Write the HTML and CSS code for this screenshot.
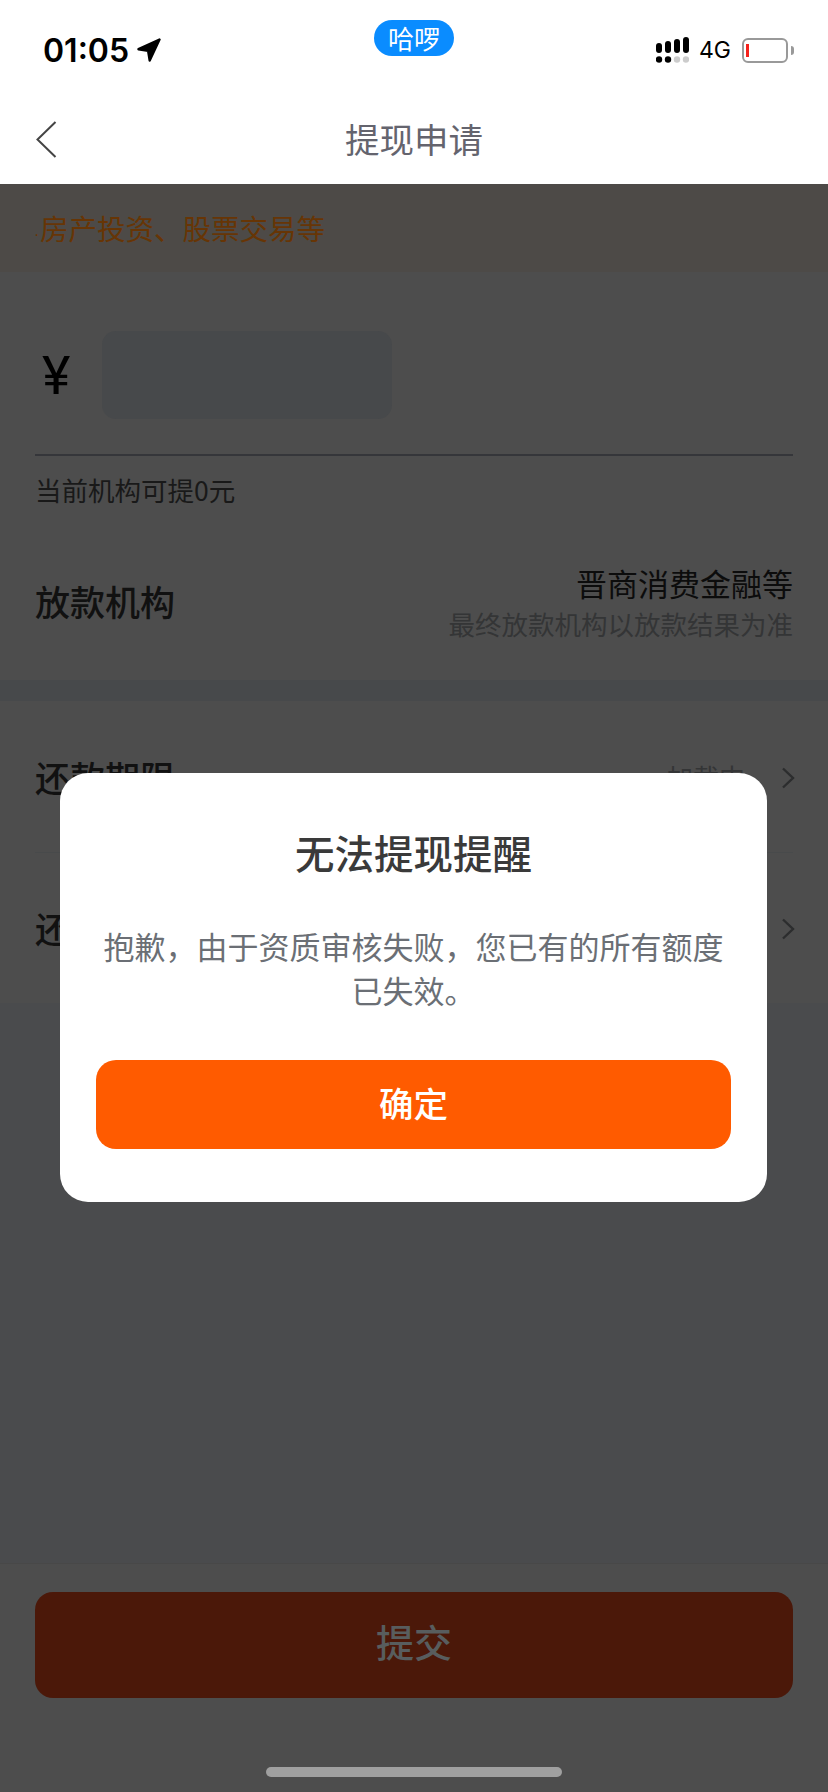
FILE: index.html
```html
<!DOCTYPE html>
<html lang="zh-CN">
<head>
    <meta charset="UTF-8">
    <meta name="viewport" content="width=device-width, initial-scale=1.0">
    <title>提现申请</title>
    <link rel="stylesheet" href="styles.css">
</head>
<body>
    <div class="page">
        <div class="status-bar">
            <div class="status-left">
                <span class="time">01:05</span>
                <svg class="location" viewBox="0 0 24 24"><path d="M22.500 1.500 1.500 11.200l9.600 1.600 1.600 9.700z" fill="#000" stroke="#000" stroke-width="2.400" stroke-linejoin="round"/></svg>
            </div>
            <div class="app-badge">哈啰</div>
            <div class="status-right">
                <svg class="signal" viewBox="0 0 33 26">
                    <rect x="0" y="6" width="6" height="10" rx="3" fill="#000"/>
                    <rect x="9" y="4" width="6" height="12" rx="3" fill="#000"/>
                    <rect x="18" y="2" width="6" height="14" rx="3" fill="#000"/>
                    <rect x="27" y="0" width="6" height="16" rx="3" fill="#000"/>
                    <circle cx="3" cy="22.500" r="3.200" fill="#000"/>
                    <circle cx="12" cy="22.500" r="3.200" fill="#000"/>
                    <circle cx="21" cy="22.500" r="3.200" fill="#ccc"/>
                    <circle cx="30" cy="22.500" r="3.200" fill="#ccc"/>
                </svg>
                <span class="network">4G</span>
                <div class="battery"><div class="battery-level"></div></div>
                <div class="battery-nub"></div>
            </div>
        </div>

        <div class="nav-bar">
            <div class="nav-side">
                <svg class="back" viewBox="0 0 21 37"><path d="M19.500 1 1.500 18.500 19.500 36" fill="none" stroke="#444" stroke-width="2"/></svg>
            </div>
            <div class="nav-title">提现申请</div>
            <div class="nav-side"></div>
        </div>

        <div class="notice"><span class="notice-dot">·</span>房产投资、股票交易等</div>

        <div class="amount">
            <div class="amount-input">
                <span class="yen">¥</span>
                <div class="input-box"></div>
            </div>
            <div class="hint">当前机构可提0元</div>
        </div>

        <div class="lender">
            <div class="row-label">放款机构</div>
            <div class="lender-info">
                <div class="lender-name">晋商消费金融等</div>
                <div class="lender-note">最终放款机构以放款结果为准</div>
            </div>
        </div>

        <div class="gap"></div>

        <div class="options">
            <div class="option">
                <div class="row-label">还款期限</div>
                <div class="option-value">
                    <span>加载中</span>
                    <svg class="chevron" viewBox="0 0 14 22"><path d="M2 1.500 12 11 2 20.500" fill="none" stroke="#2c2d2e" stroke-width="2.400"/></svg>
                </div>
            </div>
            <div class="option option-last">
                <div class="row-label">还款方式</div>
                <div class="option-value">
                    <svg class="chevron" viewBox="0 0 14 22"><path d="M2 1.500 12 11 2 20.500" fill="none" stroke="#2c2d2e" stroke-width="2.400"/></svg>
                </div>
            </div>
        </div>

        <div class="filler"></div>

        <div class="footer">
            <div class="submit">提交</div>
            <div class="home-bar"></div>
        </div>

        <div class="dialog">
            <div class="dialog-title">无法提现提醒</div>
            <div class="dialog-text">抱歉，由于资质审核失败，您已有的所有额度已失效。</div>
            <div class="dialog-btn">确定</div>
        </div>
    </div>
</body>
</html>
```

FILE: styles.css
```css
* {
    box-sizing: border-box;
}
body {
    margin: 0;
    font-family: "Noto Sans CJK SC", "Noto Sans", sans-serif;
    background: #4d4d4d;
}
.page {
    position: relative;
    width: 828px;
    height: 1792px;
    display: flex;
    flex-direction: column;
    overflow: hidden;
    background: #4d4d4d;
}

/* status bar */
.status-bar {
    height: 88px;
    background: #fff;
    display: grid;
    grid-template-columns: 1fr auto 1fr;
    padding: 0 34px;
}
.status-left {
    display: flex;
    align-items: center;
    gap: 8px;
    height: 100px;
    padding-left: 9px;
}
.time {
    font-family: Inter, sans-serif;
    font-size: 32px;
    font-weight: 600;
    color: #000;
}
.location {
    width: 24px;
    height: 24px;
}
.app-badge {
    width: 80px;
    height: 36px;
    margin-top: 20px;
    border-radius: 18px;
    background: #0a8cff;
    color: #fff;
    font-size: 26px;
    line-height: 35px;
    text-align: center;
}
.status-right {
    display: flex;
    align-items: center;
    justify-content: flex-end;
    height: 100px;
}
.signal {
    width: 33px;
    height: 26px;
}
.network {
    margin-left: 10px;
    font-family: Inter, sans-serif;
    font-size: 23px;
    color: #000;
}
.battery {
    width: 46px;
    height: 25px;
    margin-left: 11px;
    padding: 4px 2px;
    border: 2px solid #999;
    border-radius: 6px;
}
.battery-level {
    width: 3px;
    height: 100%;
    background: #f5221c;
}
.battery-nub {
    width: 3px;
    height: 9px;
    margin-left: 3px;
    border-radius: 0 3px 3px 0;
    background: #999;
}

/* nav */
.nav-bar {
    height: 96px;
    background: #fff;
    display: grid;
    grid-template-columns: 1fr auto 1fr;
    align-items: center;
    padding: 0 35px;
}
.nav-side {
    display: flex;
    align-items: center;
}
.back {
    width: 21px;
    height: 37px;
    margin: 6px 0 0 1px;
}
.nav-title {
    font-size: 34.500px;
    line-height: 48px;
    margin-top: 4px;
    color: #64646e;
}

/* page under the dialog */
.notice {
    height: 88px;
    padding-left: 34px;
    background: #4d4a47;
    color: #673505;
    font-size: 28.500px;
    line-height: 88px;
    white-space: nowrap;
}
.notice-dot {
    display: inline-block;
    width: 6px;
    font-family: "Liberation Sans", sans-serif;
    font-size: 16px;
}
.amount {
    padding: 60px 35px 0;
}
.amount-input {
    display: flex;
    align-items: center;
    height: 124px;
    padding-bottom: 36px;
    border-bottom: 2px solid #35363a;
}
.yen {
    width: 67px;
    padding-left: 7px;
    font-family: Roboto, sans-serif;
    font-size: 54px;
    font-weight: 400;
    color: #000;
}
.input-box {
    width: 290px;
    height: 88px;
    border-radius: 14px;
    background: #47494b;
}
.hint {
    margin-top: 16px;
    font-size: 26.500px;
    line-height: 36px;
    color: #191919;
}
.lender {
    height: 172px;
    padding: 14px 35px 0;
    display: flex;
    align-items: center;
    justify-content: space-between;
}
.row-label {
    font-size: 35px;
    font-weight: 500;
    line-height: 50px;
    color: #111;
}
.lender-info {
    text-align: right;
    margin-top: 4px;
}
.lender-name {
    font-size: 31px;
    line-height: 42px;
    color: #0c0c0c;
}
.lender-note {
    font-size: 26.500px;
    line-height: 40px;
    color: #343536;
}
.gap {
    height: 21px;
    background: #47494b;
}
.options {
    height: 302px;
    padding: 0 35px;
}
.option {
    height: 152px;
    display: flex;
    align-items: center;
    justify-content: space-between;
    border-bottom: 1px solid #484a4b;
}
.option-last {
    height: 150px;
    border-bottom: none;
}
.option-value {
    display: flex;
    align-items: center;
    gap: 36px;
    font-size: 26px;
    color: #343536;
}
.chevron {
    width: 14px;
    height: 22px;
    margin: 2px -2px 0 0;
}
.filler {
    flex: 1;
    background: #4a4b4d;
}
.footer {
    height: 229px;
    padding: 28px 35px 0;
    border-top: 1px solid #484848;
}
.submit {
    height: 106px;
    border-radius: 18px;
    background: #4b1809;
    color: #585d5e;
    font-size: 38px;
    font-weight: 500;
    line-height: 98px;
    text-align: center;
}
.home-bar {
    width: 296px;
    height: 10px;
    margin: 69px auto 0;
    border-radius: 6px;
    background: #a0a0a0;
}

/* dialog */
.dialog {
    position: absolute;
    left: 60px;
    top: 773px;
    width: 707px;
    height: 429px;
    padding: 0 36px;
    border-radius: 28px;
    background: #fff;
    text-align: center;
}
.dialog-title {
    margin-top: 51px;
    font-size: 39.500px;
    font-weight: 500;
    line-height: 56px;
    color: #3a3a3a;
}
.dialog-text {
    margin-top: 44px;
    font-size: 31px;
    line-height: 44px;
    color: #6b6f75;
}
.dialog-btn {
    height: 89px;
    margin-top: 48px;
    border-radius: 20px;
    background: #ff5b00;
    color: #fff;
    font-size: 34.500px;
    font-weight: 500;
    line-height: 84px;
}
```
